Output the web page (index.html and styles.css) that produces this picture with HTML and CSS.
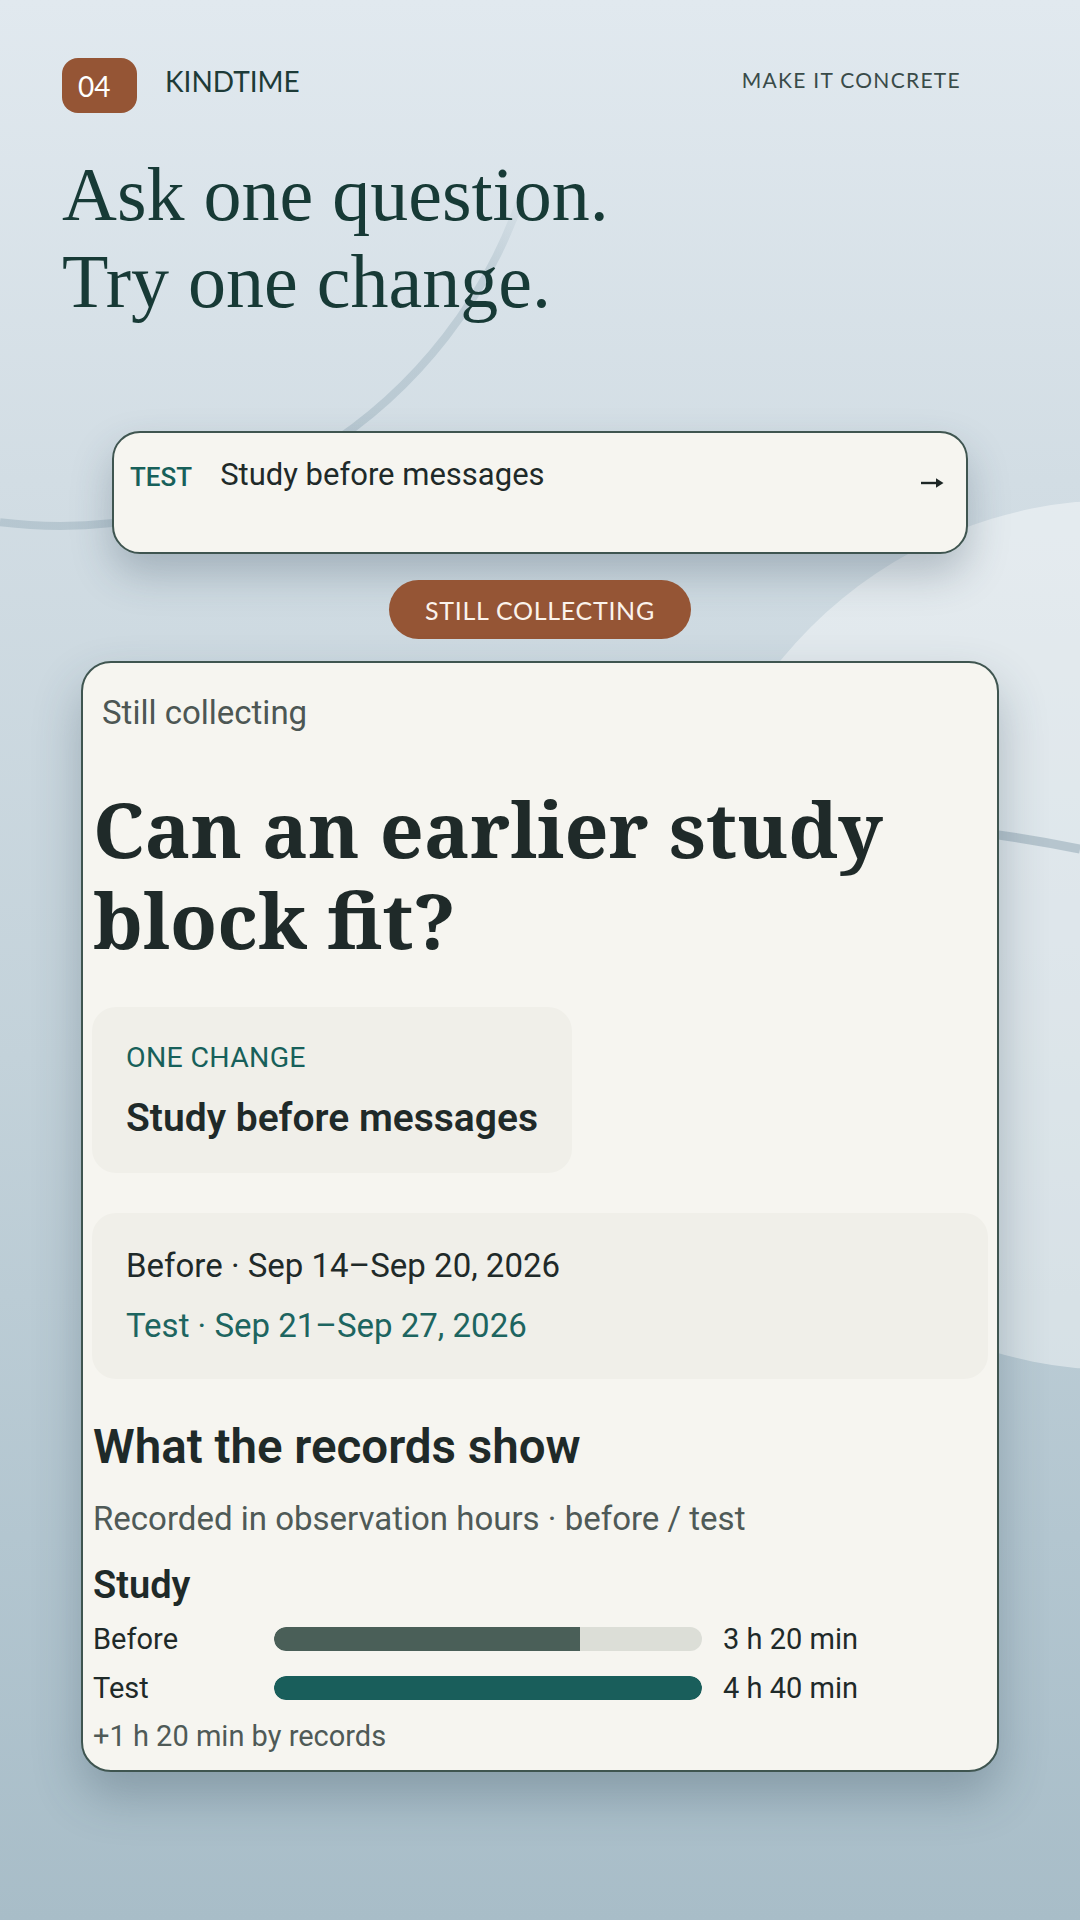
FILE: index.html
```html
<!DOCTYPE html>
<html lang="en">
<head>
    <meta charset="UTF-8">
    <meta name="viewport" content="width=device-width, initial-scale=1.0">
    <title>Kindtime - Make it concrete</title>
    <link rel="stylesheet" href="styles.css">
</head>
<body>

<svg class="backdrop" width="1080" height="1920" viewBox="0 0 1080 1920" aria-hidden="true">
    <defs>
        <linearGradient id="arcFade" gradientUnits="userSpaceOnUse" x1="300" y1="460" x2="528" y2="185">
            <stop offset="0" stop-color="#8ea6b3" stop-opacity="0.4"/>
            <stop offset="0.75" stop-color="#8ea6b3" stop-opacity="0.32"/>
            <stop offset="1" stop-color="#8ea6b3" stop-opacity="0"/>
        </linearGradient>
    </defs>
    <circle cx="1118" cy="935" r="435" fill="#ffffff" fill-opacity="0.42"/>
    <path d="M0 522.3 A488 488 0 0 0 522 195" fill="none" stroke="url(#arcFade)" stroke-width="8"/>
    <path d="M900 824 Q990 831 1080 849" fill="none" stroke="#93aab6" stroke-opacity="0.55" stroke-width="9"/>
</svg>

<main class="screen">
    <header class="topbar">
        <span class="step">04</span>
        <span class="brand">KINDTIME</span>
        <span class="section-name">MAKE IT CONCRETE</span>
    </header>

    <h1 class="headline">Ask one question.<br>Try one change.</h1>

    <div class="test-card">
        <span class="test-tag">TEST</span>
        <span class="test-name">Study before messages</span>
        <svg class="arrow" width="24" height="12" viewBox="0 0 24 12" aria-hidden="true">
            <path d="M1 6H19" stroke="#1d2625" stroke-width="2.4" fill="none"/>
            <path d="M16 1.2L23.5 6L16 10.8Z" fill="#1d2625"/>
        </svg>
    </div>

    <div class="status-pill">STILL COLLECTING</div>

    <section class="card">
        <p class="card-status">Still collecting</p>
        <h2 class="card-title">Can an earlier study block fit?</h2>

        <div class="change-box">
            <div class="change-label">ONE CHANGE</div>
            <div class="change-name">Study before messages</div>
        </div>

        <div class="dates">
            <div class="date-before">Before · Sep 14–Sep 20, 2026</div>
            <div class="date-test">Test · Sep 21–Sep 27, 2026</div>
        </div>

        <h3 class="records-title">What the records show</h3>
        <p class="records-note">Recorded in observation hours · before / test</p>

        <h4 class="metric-name">Study</h4>
        <div class="bars">
            <span class="bar-label">Before</span>
            <div class="bar-track"><div class="bar-fill before" style="width: 71.4%;"></div></div>
            <span class="bar-value">3 h 20 min</span>

            <span class="bar-label">Test</span>
            <div class="bar-track"><div class="bar-fill test" style="width: 100%;"></div></div>
            <span class="bar-value">4 h 40 min</span>
        </div>
        <p class="delta">+1 h 20 min by records</p>
    </section>
</main>

</body>
</html>
```

FILE: styles.css
```css
body {
    margin: 0;
    min-height: 1920px;
    position: relative;
    overflow: hidden;
    font-family: Roboto, "Noto Sans", sans-serif;
    color: #1f2a29;
    background: linear-gradient(180deg, #e1e9ef 0%, #d2dde4 25%, #c3d2da 55%, #b3c6d0 80%, #a8bdc8 100%);
}
.backdrop {
    position: absolute;
    top: 0;
    left: 0;
}
.screen {
    position: relative;
    z-index: 1;
    padding: 58px 62px 0;
    display: flex;
    flex-direction: column;
}

/* top bar */
.topbar {
    display: flex;
    align-items: flex-start;
    height: 55px;
    font-family: Lato, "Open Sans", sans-serif;
}
.step {
    width: 75px;
    height: 55px;
    box-sizing: border-box;
    padding-left: 16px;
    display: flex;
    align-items: center;
    border-radius: 16px;
    background-color: #955535;
    color: #fff;
    font-size: 28px;
}
.brand {
    margin: 6px 0 0 28px;
    font-size: 28px;
    line-height: 34px;
    color: #1d3b38;
}
.section-name {
    margin: 9px 57px 0 auto;
    font-size: 21px;
    line-height: 26px;
    letter-spacing: 1.3px;
    color: #394b49;
}

.headline {
    margin: 38px 0 0;
    font-family: "Liberation Serif", "Times New Roman", serif;
    font-weight: 400;
    font-size: 76px;
    line-height: 87px;
    color: #173a36;
}

/* current test */
.test-card {
    width: 856px;
    height: 123px;
    box-sizing: border-box;
    margin: 106px auto 0;
    padding: 23px 22px 0 16px;
    display: flex;
    align-items: flex-start;
    background: #f6f5f0;
    border: 2px solid #3f5550;
    border-radius: 28px;
    box-shadow: 0 20px 40px rgba(45, 70, 85, 0.28);
}
.test-tag {
    margin-top: 5px;
    font-size: 26px;
    line-height: 32px;
    font-weight: 500;
    color: #17605a;
}
.test-name {
    margin-left: 28px;
    font-size: 31px;
    line-height: 38px;
    color: #1f2a29;
}
.arrow {
    margin: 21px 0 0 auto;
}

.status-pill {
    width: 302px;
    height: 59px;
    margin: 26px auto 0;
    display: flex;
    align-items: center;
    justify-content: center;
    border-radius: 30px;
    background-color: #955535;
    color: #fbf3ec;
    font-family: Lato, "Open Sans", sans-serif;
    font-size: 25px;
    letter-spacing: 0.7px;
}

/* main card */
.card {
    width: 918px;
    box-sizing: border-box;
    margin: 22px auto 0;
    padding: 30px 9px 17px;
    background: #f6f5f0;
    border: 2px solid #3f5550;
    border-radius: 30px;
    box-shadow: 0 24px 48px rgba(45, 70, 85, 0.3);
}
.card-status {
    margin: 0 0 0 10px;
    font-size: 33px;
    line-height: 40px;
    color: #4d5754;
}
.card-title {
    margin: 50px 0 0 1px;
    font-family: "Noto Serif", "Liberation Serif", serif;
    font-weight: 700;
    font-size: 77px;
    line-height: 91px;
    color: #1f2a29;
}
.change-box {
    width: fit-content;
    margin-top: 42px;
    padding: 34px 34px 33px;
    border-radius: 24px;
    background: #f0efe9;
}
.change-label {
    font-size: 28.5px;
    line-height: 34px;
    letter-spacing: 0.3px;
    color: #17605a;
}
.change-name {
    margin-top: 21px;
    font-size: 39px;
    line-height: 44px;
    font-weight: 600;
    color: #1f2a29;
}
.dates {
    margin-top: 40px;
    padding: 33px 34px;
    display: flex;
    flex-direction: column;
    gap: 20px;
    border-radius: 24px;
    background: #f0efe9;
    font-size: 33px;
    line-height: 40px;
}
.date-before {
    color: #1f2a29;
}
.date-test {
    color: #1d6560;
}
.records-title {
    margin: 42px 0 0 1px;
    font-size: 47.5px;
    line-height: 52px;
    font-weight: 600;
}
.records-note {
    margin: 26px 0 0 1px;
    font-size: 33px;
    line-height: 40px;
    color: #4f5a57;
}
.metric-name {
    margin: 24px 0 0 1px;
    font-size: 38px;
    line-height: 44px;
    font-weight: 600;
}
.bars {
    margin-top: 15px;
    padding-left: 1px;
    display: grid;
    grid-template-columns: 160px 428px auto;
    column-gap: 21px;
    row-gap: 15px;
    align-items: center;
}
.bar-label {
    font-size: 29px;
    line-height: 34px;
    color: #1f2a29;
}
.bar-track {
    height: 24px;
    border-radius: 12px;
    background: #dcded7;
    overflow: hidden;
}
.bar-fill {
    height: 100%;
    border-radius: 12px 0 0 12px;
}
.bar-fill.before {
    background: #4a5f58;
}
.bar-fill.test {
    background: #195e5b;
    border-radius: 12px;
}
.bar-value {
    font-size: 29px;
    line-height: 34px;
    color: #1f2a29;
}
.delta {
    margin: 14px 0 0 1px;
    font-size: 29px;
    line-height: 34px;
    color: #4f5a57;
}
```
